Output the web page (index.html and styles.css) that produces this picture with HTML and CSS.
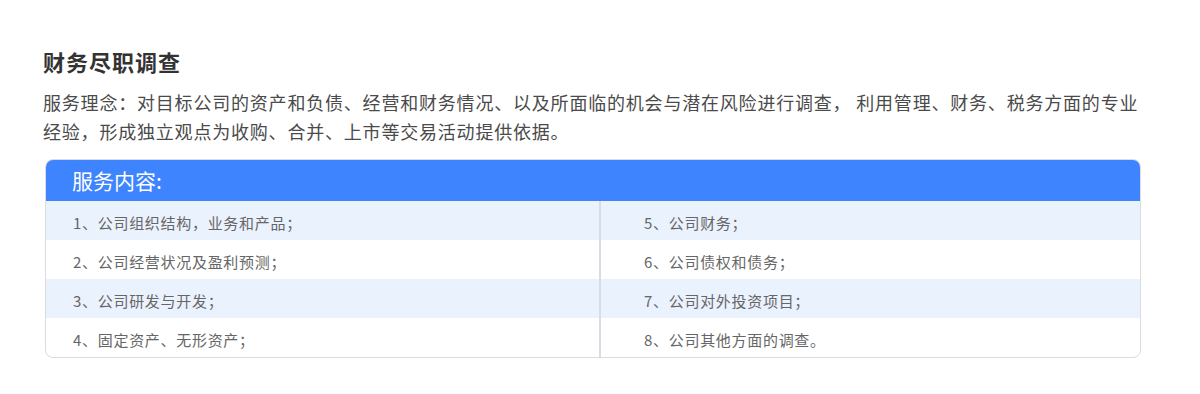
FILE: index.html
```html
<!DOCTYPE html>
<html lang="zh-CN">
<head>
<meta charset="utf-8">
<title>财务尽职调查</title>
<link rel="stylesheet" href="styles.css">
</head>
<body>
<main class="page">
  <h2 class="title">财务尽职调查</h2>
  <p class="intro">服务理念：对目标公司的资产和负债、经营和财务情况、以及所面临的机会与潜在风险进行调查， 利用管理、财务、税务方面的专业经验，形成独立观点为收购、合并、上市等交易活动提供依据。</p>
  <section class="box">
    <div class="box-head">服务内容:</div>
    <div class="grid">
      <div class="cell left alt">1、公司组织结构，业务和产品；</div>
      <div class="cell right alt">5、公司财务；</div>
      <div class="cell left">2、公司经营状况及盈利预测；</div>
      <div class="cell right">6、公司债权和债务；</div>
      <div class="cell left alt">3、公司研发与开发；</div>
      <div class="cell right alt">7、公司对外投资项目；</div>
      <div class="cell left">4、固定资产、无形资产；</div>
      <div class="cell right">8、公司其他方面的调查。</div>
    </div>
  </section>
</main>
</body>
</html>
```

FILE: styles.css
```css
html, body {
  margin: 0;
  padding: 0;
  background: #ffffff;
}

.page {
  font-family: "Noto Sans CJK SC", "Noto Sans", sans-serif;
  padding: 46px 59px 0 43px;
}

.title {
  margin: 0;
  font-size: 22px;
  line-height: 30px;
  font-weight: 700;
  letter-spacing: 1px;
  color: #333333;
}

.intro {
  margin: 12px 0 0 0;
  font-size: 18px;
  line-height: 29px;
  letter-spacing: 0.8px;
  color: #4a4a4a;
}

.box {
  margin: 13px 0 0 2px;
  border: 1px solid #dcdcdc;
  border-radius: 8px;
  overflow: hidden;
}

.box-head {
  background: #3e84fe;
  color: #ffffff;
  font-size: 21px;
  line-height: 42px;
  height: 42px;
  padding-left: 27px;
  margin: -1px -1px 0 -1px;
}

.grid {
  display: grid;
  grid-template-columns: 555px 1fr;
}

.cell {
  height: 39px;
  box-sizing: border-box;
  padding-top: 4px;
  line-height: 35px;
  font-size: 15px;
  letter-spacing: 0.7px;
  color: #666666;
}

.cell.alt {
  background: #eaf2fe;
}

.left {
  padding-left: 27px;
  border-right: 2px solid #d9dde3;
}

.right {
  padding-left: 43px;
}
```
